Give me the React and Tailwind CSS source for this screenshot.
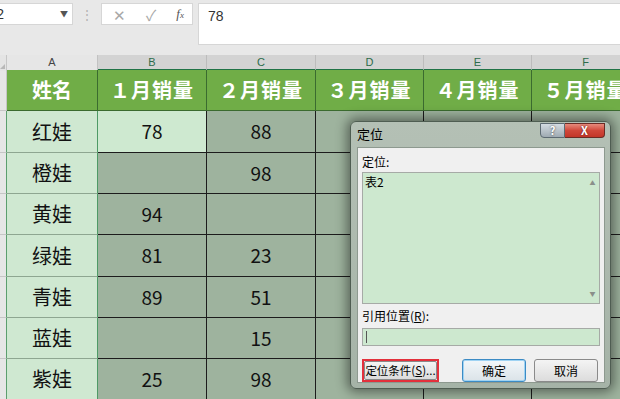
import React from "react";

const rows = [
  ["红娃", "78", "88"],
  ["橙娃", "", "98"],
  ["黄娃", "94", ""],
  ["绿娃", "81", "23"],
  ["青娃", "89", "51"],
  ["蓝娃", "", "15"],
  ["紫娃", "25", "98"],
];

const heads = ["１月销量", "２月销量", "３月销量", "４月销量", "５月销量"];
const letters = ["B", "C", "D", "E", "F"];
const rowH = ["h-[42px]", "h-[41px]", "h-[41px]", "h-[42px]", "h-[41px]", "h-[41px]", "h-[41px]"];

function Dialog() {
  return (
    <div className="absolute left-[350px] top-[121px] w-[261px] h-[268px] rounded-[6px] border border-[#4f5d52] bg-gradient-to-b from-[#b4c0b5] to-[#a5b3a7] shadow-[0_0_12px_3px_rgba(0,0,0,0.45)] font-['Noto_Sans_CJK_SC',sans-serif]">
      {/* title */}
      <div className="h-[24px] pl-[6px] flex items-center text-[13px] text-black">定位</div>
      <div className="absolute top-[1px] right-[5px] flex">
        <div className="w-[25px] h-[15px] rounded-bl-[4px] border border-[#5d6a72] bg-gradient-to-b from-[#d4dce2] to-[#9faab2] flex items-center justify-center text-[11px] font-bold text-white leading-none [text-shadow:0_0_2px_#333]">
          ?
        </div>
        <div className="w-[40px] h-[15px] rounded-br-[4px] border border-l-0 border-[#6b2b24] bg-gradient-to-b from-[#e68a7c] via-[#d0473a] to-[#c33528] flex items-center justify-center text-[11px] font-bold text-white leading-none [text-shadow:0_0_2px_#511]">
          X
        </div>
      </div>

      {/* client */}
      <div className="ml-[6px] mr-[5px] mt-[1px] h-[236px] bg-[#f0f0f0] border border-[#8d998f] px-[4px] flex flex-col text-[12px] text-black">
        <div className="mt-[6px] h-[16px] leading-[16px]">定位:</div>
        <div className="mt-[2px] h-[132px] border border-[#a6aaa6] bg-[#cde8cf] flex">
          <div className="flex-1 pl-[2px] pt-[1px] leading-[16px]">表2</div>
          <div className="w-[13px] flex flex-col justify-between items-center py-[5px] text-[6px] text-[#8a8f8a]">
            <span>▲</span>
            <span>▼</span>
          </div>
        </div>
        <div className="mt-[4px] h-[16px] leading-[16px]">
          引用位置(<span className="underline">R</span>):
        </div>
        <div className="mt-[4px] h-[18px] border border-[#a6aaa6] bg-[#cde8cf] flex items-center pl-[3px]">
          <div className="w-[1px] h-[12px] bg-[#555]" />
        </div>
        <div className="mt-[13px] flex items-center">
          <div className="w-[77px] h-[23px] border-2 border-[#e3303c] flex">
            <div className="flex-1 rounded-[2px] border border-[#8a8a8a] bg-gradient-to-b from-[#f4f4f4] to-[#dcdcdc] flex items-center justify-center text-[11.5px]">
              定位条件(<span className="underline">S</span>)...
            </div>
          </div>
          <div className="ml-[23px] w-[64px] h-[23px] rounded-[3px] border border-[#3c8bc4] shadow-[inset_0_0_0_1px_#9fd3f3] bg-gradient-to-b from-[#f2f7fa] to-[#dbe3e8] flex items-center justify-center">
            确定
          </div>
          <div className="ml-[8px] w-[64px] h-[23px] rounded-[3px] border border-[#8a8a8a] bg-gradient-to-b from-[#f4f4f4] to-[#dcdcdc] flex items-center justify-center">
            取消
          </div>
        </div>
      </div>
    </div>
  );
}

export default function App() {
  return (
    <div className="relative w-[620px] h-[399px] overflow-hidden bg-[#e8e8e8] font-['Noto_Sans_CJK_SC',sans-serif]">
      {/* formula bar */}
      <div className="h-[55px] flex items-start pt-[3px]">
        <div className="w-[73px] h-[22px] bg-white border border-l-0 border-[#d6d6d6] flex items-center justify-between pr-[4px] overflow-hidden">
          <span className="-ml-[13px] text-[14px] text-[#333] font-['Liberation_Sans',sans-serif]">B2</span>
          <span className="text-[8px] text-[#555]">▼</span>
        </div>
        <div className="w-[28px] h-[22px] flex items-center justify-center text-[12px] text-[#b0b0b0]">⋮</div>
        <div className="w-[92px] h-[22px] bg-white border border-[#d6d6d6] flex items-center text-[#a8a8a8]">
          <span className="ml-[11px] text-[15px] leading-none">✕</span>
          <span className="ml-[20px] text-[15px] leading-none">✓</span>
          <span className="ml-[20px] text-[13px] italic font-['Liberation_Serif',serif] text-[#555]">
            f<span className="text-[9px]">x</span>
          </span>
        </div>
        <div className="ml-[5px] flex-1 h-[42px] bg-white border border-r-0 border-[#d6d6d6] pl-[9px] pt-[2px] text-[14px] text-[#333] font-['Liberation_Sans',sans-serif]">
          78
        </div>
      </div>

      {/* column letters */}
      <div className="grid grid-cols-[7px_91px_109px_109px_108px_108px_108px] h-[15px] text-[11px] leading-[14px] font-['Liberation_Sans',sans-serif]">
        <div className="bg-[#e4e4e4] border-r border-[#c6c6c6] relative">
          <div className="absolute right-[1px] bottom-[2px] w-0 h-0 border-l-[5px] border-l-transparent border-b-[5px] border-b-[#b8b8b8]" />
        </div>
        <div className="bg-[#e6e6e6] border-r border-b border-[#c2c2c2] text-center text-[#444]">A</div>
        {letters.map((l) => (
          <div key={l} className="bg-[#d3d3d3] border-r border-[#bcbcbc] border-b-2 border-b-[#217346] text-center text-[#2c6b4a]">
            {l}
          </div>
        ))}
      </div>

      {/* sheet */}
      <div className="grid grid-cols-[7px_91px_109px_109px_108px_108px_108px]">
        <div className="h-[41px] bg-[#e6e6e6] border-r border-b border-[#c6c6c6]" />
        <div className="h-[41px] bg-[#70ad47] border-r border-b border-[#3b6b2f] flex items-center justify-center text-white text-[20px] font-semibold">
          姓名
        </div>
        {heads.map((h) => (
          <div key={h} className="h-[41px] bg-[#70ad47] border-r border-b border-[#3b6b2f] flex items-center justify-center text-white text-[20px] font-semibold tracking-[1px] whitespace-nowrap">
            {h}
          </div>
        ))}

        {rows.map((r, i) => (
          <React.Fragment key={r[0]}>
            <div className={`${rowH[i]} bg-[#e6e6e6] border-b border-[#c6c6c6] border-r border-r-[#5c9e6e]`} />
            <div className={`${rowH[i]} bg-[#cfe8d1] border-r border-r-[#4e9a66] border-b border-b-[#8ea691] flex items-center justify-center text-[20px] text-[#111]`}>
              {r[0]}
            </div>
            <div className={`${rowH[i]} ${i === 0 ? "bg-[#cee9d0]" : "bg-[#9eb39e]"} border-r border-b border-[#1c1c1c] flex items-center justify-center text-[19px] text-[#111]`}>
              {r[1]}
            </div>
            <div className={`${rowH[i]} bg-[#9eb39e] border-r border-b border-[#1c1c1c] flex items-center justify-center text-[19px] text-[#111]`}>
              {r[2]}
            </div>
            <div className={`${rowH[i]} bg-[#9eb39e] border-r border-b border-[#1c1c1c]`} />
            <div className={`${rowH[i]} bg-[#9eb39e] border-r border-b border-[#1c1c1c]`} />
            <div className={`${rowH[i]} bg-[#9eb39e] border-r border-b border-[#1c1c1c]`} />
          </React.Fragment>
        ))}
      </div>

      <Dialog />
    </div>
  );
}
